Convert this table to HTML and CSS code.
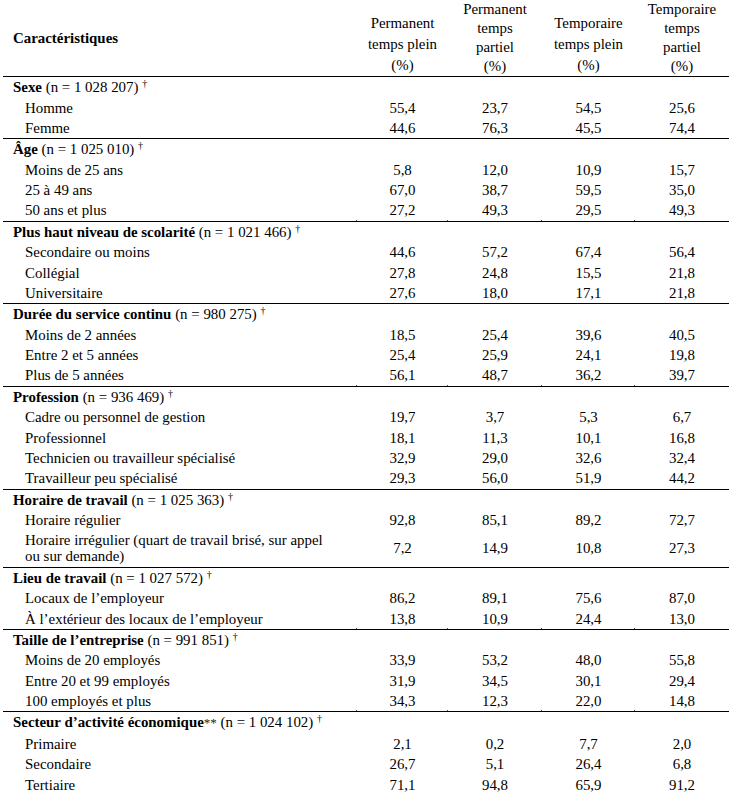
FILE: index.html
```html
<!DOCTYPE html>
<html lang="fr">
<head>
<meta charset="utf-8">
<title>Caractéristiques</title>
<link rel="stylesheet" href="styles.css">
</head>
<body>
<table class="data">
  <colgroup>
    <col class="c-label"><col class="c-v1"><col class="c-v2"><col class="c-v3"><col class="c-v4">
  </colgroup>
  <thead>
    <tr>
      <th class="h-label">Caractéristiques</th>
      <th><div class="h-l21">Permanent<br>temps plein<br>(%)</div></th>
      <th><div class="h-l19">Permanent<br>temps<br>partiel<br>(%)</div></th>
      <th><div class="h-l21">Temporaire<br>temps plein<br>(%)</div></th>
      <th><div class="h-l19">Temporaire<br>temps<br>partiel<br>(%)</div></th>
    </tr>
  </thead>
  <tbody>
    <tr><td class="lab"><b>Sexe</b> (n = 1 028 207) <sup class="dag">†</sup></td><td></td><td></td><td></td><td></td></tr>
    <tr><td class="lab sub">Homme</td><td class="num">55,4</td><td class="num">23,7</td><td class="num">54,5</td><td class="num">25,6</td></tr>
    <tr><td class="lab sub">Femme</td><td class="num">44,6</td><td class="num">76,3</td><td class="num">45,5</td><td class="num">74,4</td></tr>
  </tbody>
  <tbody>
    <tr><td class="lab"><b>Âge</b> (n = 1 025 010) <sup class="dag">†</sup></td><td></td><td></td><td></td><td></td></tr>
    <tr><td class="lab sub">Moins de 25 ans</td><td class="num">5,8</td><td class="num">12,0</td><td class="num">10,9</td><td class="num">15,7</td></tr>
    <tr><td class="lab sub">25 à 49 ans</td><td class="num">67,0</td><td class="num">38,7</td><td class="num">59,5</td><td class="num">35,0</td></tr>
    <tr class="ticks"><td class="lab sub">50 ans et plus</td><td class="num">27,2</td><td class="num">49,3</td><td class="num">29,5</td><td class="num last">49,3</td></tr>
  </tbody>
  <tbody>
    <tr><td class="lab"><b>Plus haut niveau de scolarité</b> (n = 1 021 466) <sup class="dag">†</sup></td><td></td><td></td><td></td><td></td></tr>
    <tr><td class="lab sub">Secondaire ou moins</td><td class="num">44,6</td><td class="num">57,2</td><td class="num">67,4</td><td class="num">56,4</td></tr>
    <tr><td class="lab sub">Collégial</td><td class="num">27,8</td><td class="num">24,8</td><td class="num">15,5</td><td class="num">21,8</td></tr>
    <tr><td class="lab sub">Universitaire</td><td class="num">27,6</td><td class="num">18,0</td><td class="num">17,1</td><td class="num">21,8</td></tr>
  </tbody>
  <tbody>
    <tr><td class="lab"><b>Durée du service continu</b> (n = 980 275) <sup class="dag">†</sup></td><td></td><td></td><td></td><td></td></tr>
    <tr><td class="lab sub">Moins de 2 années</td><td class="num">18,5</td><td class="num">25,4</td><td class="num">39,6</td><td class="num">40,5</td></tr>
    <tr><td class="lab sub">Entre 2 et 5 années</td><td class="num">25,4</td><td class="num">25,9</td><td class="num">24,1</td><td class="num">19,8</td></tr>
    <tr class="ticks"><td class="lab sub">Plus de 5 années</td><td class="num">56,1</td><td class="num">48,7</td><td class="num">36,2</td><td class="num last">39,7</td></tr>
  </tbody>
  <tbody>
    <tr><td class="lab"><b>Profession</b> (n = 936 469) <sup class="dag">†</sup></td><td></td><td></td><td></td><td></td></tr>
    <tr><td class="lab sub">Cadre ou personnel de gestion</td><td class="num">19,7</td><td class="num">3,7</td><td class="num">5,3</td><td class="num">6,7</td></tr>
    <tr><td class="lab sub">Professionnel</td><td class="num">18,1</td><td class="num">11,3</td><td class="num">10,1</td><td class="num">16,8</td></tr>
    <tr><td class="lab sub">Technicien ou travailleur spécialisé</td><td class="num">32,9</td><td class="num">29,0</td><td class="num">32,6</td><td class="num">32,4</td></tr>
    <tr><td class="lab sub">Travailleur peu spécialisé</td><td class="num">29,3</td><td class="num">56,0</td><td class="num">51,9</td><td class="num">44,2</td></tr>
  </tbody>
  <tbody>
    <tr><td class="lab"><b>Horaire de travail</b> (n = 1 025 363) <sup class="dag">†</sup></td><td></td><td></td><td></td><td></td></tr>
    <tr><td class="lab sub">Horaire régulier</td><td class="num">92,8</td><td class="num">85,1</td><td class="num">89,2</td><td class="num">72,7</td></tr>
    <tr><td class="lab sub">Horaire irrégulier (quart de travail brisé, sur appel ou sur demande)</td><td class="num">7,2</td><td class="num">14,9</td><td class="num">10,8</td><td class="num">27,3</td></tr>
  </tbody>
  <tbody>
    <tr><td class="lab"><b>Lieu de travail</b> (n = 1 027 572) <sup class="dag">†</sup></td><td></td><td></td><td></td><td></td></tr>
    <tr><td class="lab sub">Locaux de l’employeur</td><td class="num">86,2</td><td class="num">89,1</td><td class="num">75,6</td><td class="num">87,0</td></tr>
    <tr class="ticks"><td class="lab sub">À l’extérieur des locaux de l’employeur</td><td class="num">13,8</td><td class="num">10,9</td><td class="num">24,4</td><td class="num last">13,0</td></tr>
  </tbody>
  <tbody>
    <tr><td class="lab"><b>Taille de l’entreprise</b> (n = 991 851) <sup class="dag">†</sup></td><td></td><td></td><td></td><td></td></tr>
    <tr><td class="lab sub">Moins de 20 employés</td><td class="num">33,9</td><td class="num">53,2</td><td class="num">48,0</td><td class="num">55,8</td></tr>
    <tr><td class="lab sub">Entre 20 et 99 employés</td><td class="num">31,9</td><td class="num">34,5</td><td class="num">30,1</td><td class="num">29,4</td></tr>
    <tr class="ticks"><td class="lab sub">100 employés et plus</td><td class="num">34,3</td><td class="num">12,3</td><td class="num">22,0</td><td class="num last">14,8</td></tr>
  </tbody>
  <tbody>
    <tr><td class="lab"><b>Secteur d’activité économique</b><span class="ast">**</span> (n = 1 024 102) <sup class="dag">†</sup></td><td></td><td></td><td></td><td></td></tr>
    <tr><td class="lab sub">Primaire</td><td class="num">2,1</td><td class="num">0,2</td><td class="num">7,7</td><td class="num">2,0</td></tr>
    <tr><td class="lab sub">Secondaire</td><td class="num">26,7</td><td class="num">5,1</td><td class="num">26,4</td><td class="num">6,8</td></tr>
    <tr><td class="lab sub">Tertiaire</td><td class="num">71,1</td><td class="num">94,8</td><td class="num">65,9</td><td class="num">91,2</td></tr>
  </tbody>
</table>
</body>
</html>
```

FILE: styles.css
```css
html, body {
  margin: 0;
  padding: 0;
  background: #ffffff;
}

body {
  font-family: "Liberation Serif", "Times New Roman", serif;
  font-size: 14.9px;
  color: #000000;
}

.data {
  border-collapse: collapse;
  table-layout: fixed;
  width: 726px;
  margin-left: 3px;
}

.c-label { width: 354px; }
.c-v1 { width: 91px; }
.c-v2 { width: 94px; }
.c-v3 { width: 93px; }
.c-v4 { width: 94px; }

.data th {
  font-weight: normal;
  padding: 0;
  height: 75px;
  vertical-align: bottom;
  text-align: center;
}

.data th.h-label {
  text-align: left;
  vertical-align: middle;
  font-weight: bold;
  padding-left: 10px;
}

.h-l21 { line-height: 21px; }
.h-l19 { line-height: 19px; }

.data thead tr {
  border-bottom: 1px solid #000000;
}

.data tbody {
  border-bottom: 1px solid #000000;
}

.data td {
  padding: 2.2px 0;
  line-height: 16px;
  vertical-align: middle;
}

.data td.lab {
  padding-left: 10px;
  padding-right: 20px;
}

.data td.sub {
  padding-left: 22px;
}

.data td.num {
  text-align: center;
}

.ast {
  font-size: 13px;
  color: #222222;
}

.dag {
  font-size: 10px;
  vertical-align: 5px;
  line-height: 0;
}

.ticks td {
  position: relative;
}

.ticks td::after {
  content: "";
  position: absolute;
  right: 0;
  bottom: 0;
  width: 1px;
  height: 1px;
  background: #555555;
}

.ticks td.last::after {
  display: none;
}
```
